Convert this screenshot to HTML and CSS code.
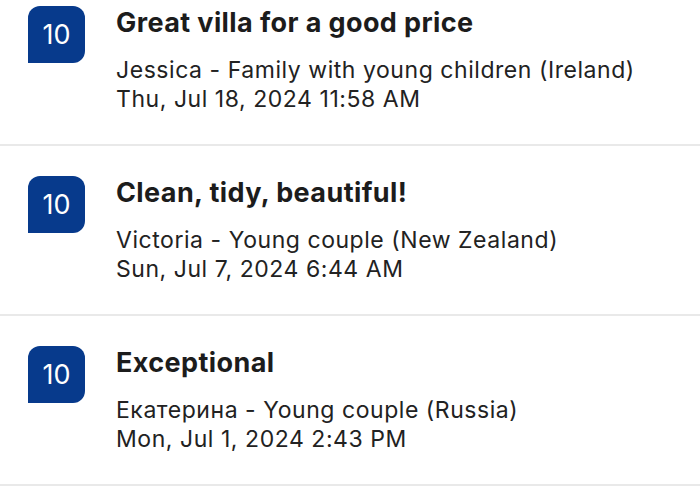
FILE: index.html
```html
<!DOCTYPE html>
<html lang="en">
<head>
<meta charset="utf-8">
<link rel="stylesheet" href="styles.css">
</head>
<body>
<div class="reviews">
  <div class="review">
    <div class="score">10</div>
    <div class="body">
      <div class="title">Great villa for a good price</div>
      <div class="meta">Jessica - Family with young children (Ireland)</div>
      <div class="meta">Thu, Jul 18, 2024 11:58 AM</div>
    </div>
  </div>
  <div class="review">
    <div class="score">10</div>
    <div class="body">
      <div class="title">Clean, tidy, beautiful!</div>
      <div class="meta">Victoria - Young couple (New Zealand)</div>
      <div class="meta">Sun, Jul 7, 2024 6:44 AM</div>
    </div>
  </div>
  <div class="review">
    <div class="score">10</div>
    <div class="body">
      <div class="title">Exceptional</div>
      <div class="meta">Екатерина - Young couple (Russia)</div>
      <div class="meta">Mon, Jul 1, 2024 2:43 PM</div>
    </div>
  </div>
</div>
</body>
</html>
```
FILE: styles.css
```css
html, body {
  margin: 0;
  padding: 0;
  background: #ffffff;
}
body {
  width: 700px;
  height: 500px;
  overflow: hidden;
  font-family: Inter, "Noto Sans", sans-serif;
  color: #1a1a1a;
}
.reviews {
  margin-top: -24px;
}
.review {
  display: flex;
  align-items: flex-start;
  gap: 31px;
  padding: 30px 0 0 28px;
  box-sizing: border-box;
  height: 170px;
  border-bottom: 2px solid #e9e9e9;
}
.score {
  width: 57px;
  height: 57px;
  flex: none;
  background: #073a8c;
  color: #ffffff;
  border-radius: 12px 12px 12px 0;
  display: flex;
  align-items: center;
  justify-content: center;
  font-size: 27px;
  font-weight: 400;
}
.body {
  display: flex;
  flex-direction: column;
}
.title {
  font-size: 27px;
  line-height: 34px;
  font-weight: 700;
  letter-spacing: 0.4px;
  color: #1c1c1c;
  margin-bottom: 16px;
}
.meta {
  font-size: 23px;
  line-height: 29px;
  letter-spacing: 0.55px;
  color: #222222;
}
```
